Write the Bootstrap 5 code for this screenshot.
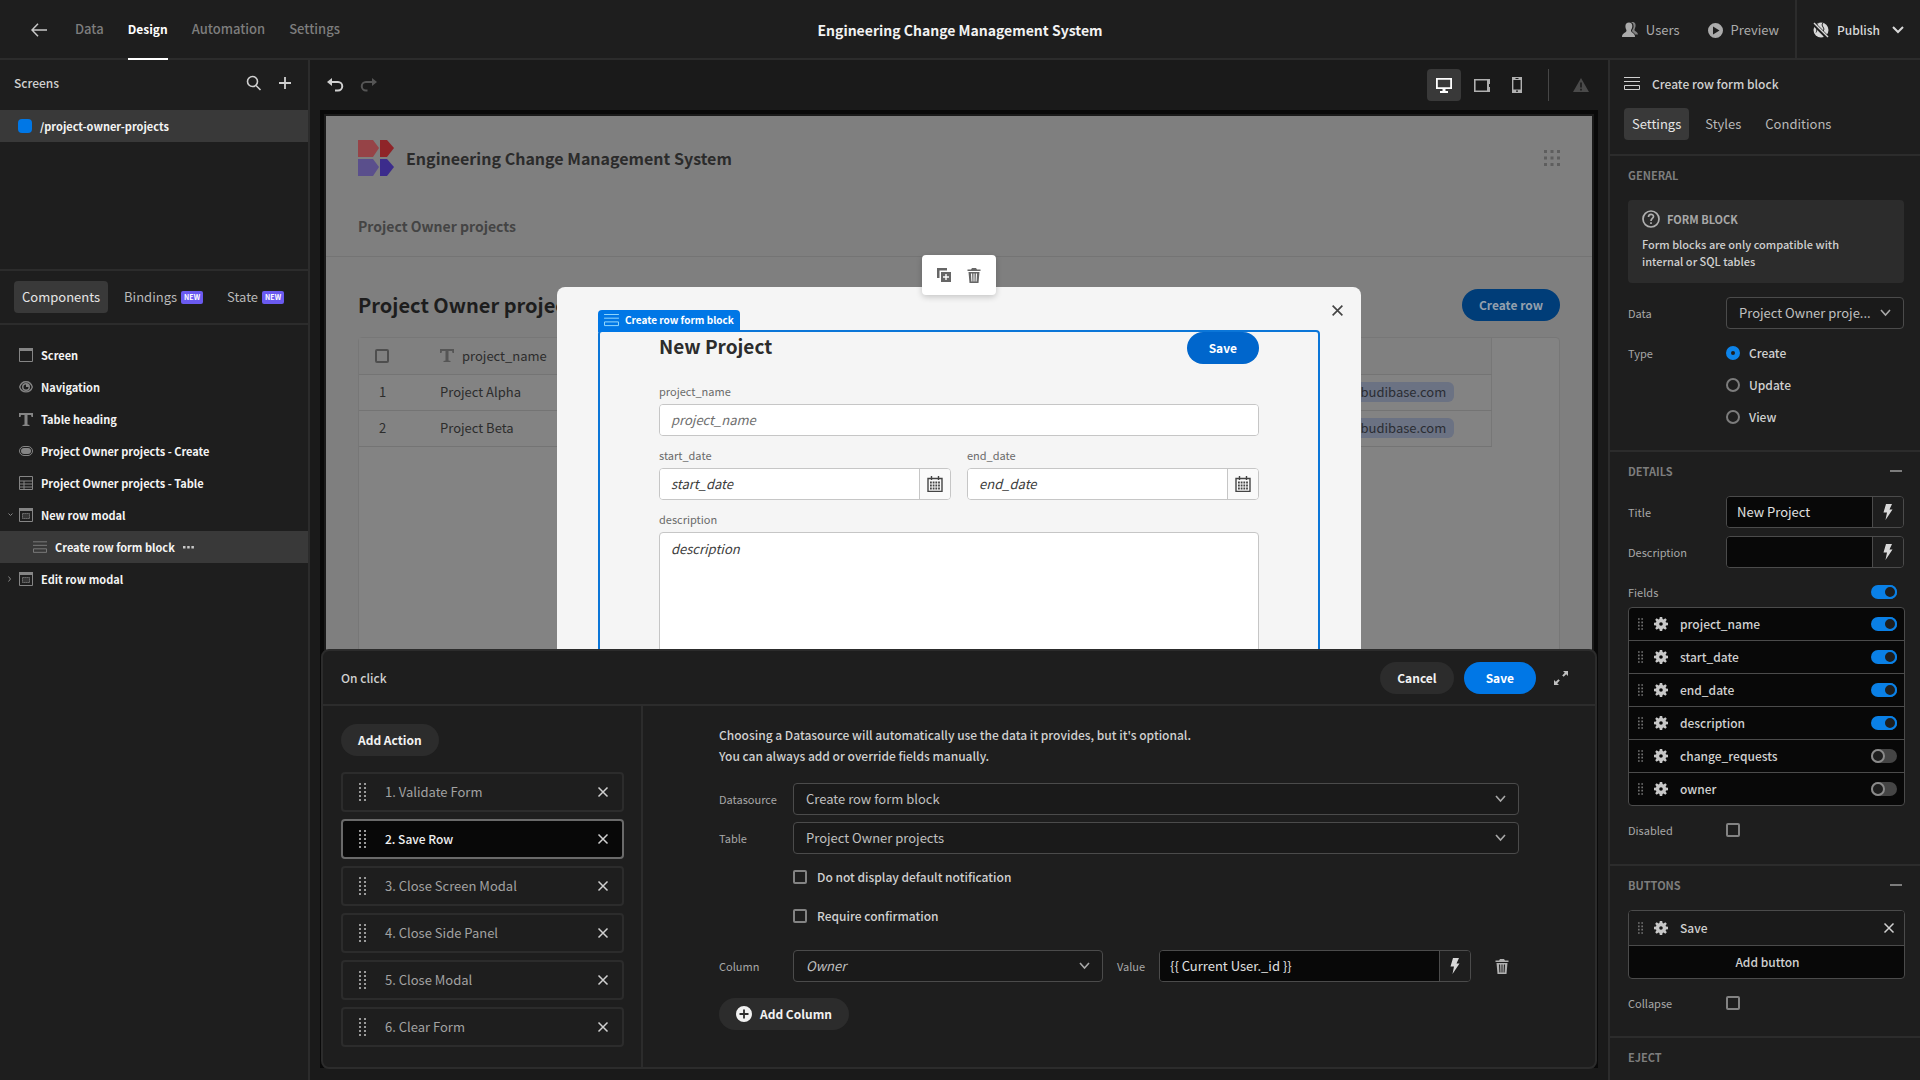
<!DOCTYPE html>
<html lang="en" data-bs-theme="dark">
<head>
<meta charset="utf-8">
<meta name="viewport" content="width=device-width, initial-scale=1">
<title>Engineering Change Management System</title>
<link href="https://cdn.jsdelivr.net/npm/bootstrap@5.3.0/dist/css/bootstrap.min.css" rel="stylesheet">
<style>
:root{--ui:"Noto Sans CJK SC","Noto Sans",sans-serif;--panel:#1e1e1e;--deep:#1a1a1a;--line:#2c2c2c;--hover:#393939;--edge:#4b4b4b;--text:#d0d0d0;--blue:#0077e6}
body{font-family:var(--ui);font-size:13px;line-height:20px;color:var(--text);background:var(--deep)}
svg{display:block;flex:none;fill:currentColor}
.stroke{fill:none;stroke:currentColor}
button,input,select,textarea{font-family:inherit}
.iconbtn{background:none;border:0;padding:0;color:inherit}
a{color:inherit;text-decoration:none}
.strong-ish{font-size:12px;font-weight:500}
/* top bar */
.topbar{height:60px;background:var(--panel);border-bottom:2px solid var(--line);display:grid;grid-template-columns:1fr auto 1fr}
.topnav{gap:24px;padding-left:31px;color:#7d7d7d;font-weight:500}
.topnav .places{gap:24px;margin-left:4px}
.topnav a{height:60px;line-height:58px}
.topnav a.current{color:#fff;font-weight:700;border-bottom:2px solid #fff;font-size:12px}
.topright{color:#ababab}
.apptitle{font-size:14px;font-weight:700;color:#f2f2f2;margin:0}
.publish{border-left:2px solid var(--line);padding:0 16px;gap:8px;color:#d8d8d8;font-size:12px;font-weight:500}
/* side panels */
.leftside{width:310px;background:var(--panel);border-right:2px solid var(--line)}
.rightside{width:312px;background:var(--panel);border-left:2px solid var(--line)}
.navrow{height:32px;font-size:11px;font-weight:700;color:#f4f4f4;gap:8px;padding-left:19px;position:relative}
.navrow svg{color:#858585}
.navrow.nested{padding-left:33px}
.navrow.picked{background:var(--hover)}
.navrow .twist{position:absolute;left:8px}
.screenlist{height:159px}
.dot{width:14px;height:14px;border-radius:4px;background:var(--blue)}
.tabset{gap:8px}
.tabset button{height:32px;padding:0 8px;border:0;border-radius:4px;background:none;color:#b8b8b8;gap:4px;font-size:13px}
.tabset button.on{background:var(--hover);color:#e6e6e6}
.newtag{background:#6a5af0;color:#fff;font-size:7px;font-weight:700;line-height:13px;height:13px;padding:0 3px;border-radius:2px}
.ruled{border-bottom:2px solid var(--line)}
/* settings */
.sect{padding:10px 16px 17px 18px;border-bottom:2px solid var(--line)}
.sect h2{font-size:11px;line-height:18px;font-weight:700;color:#7d7d7d;margin:0 0 16px}
.setrow{min-height:32px;margin-bottom:8px}
.setrow .lab{width:98px;flex:none;font-size:11px;color:#a8a8a8}
.hint{background:var(--line);border-radius:4px;padding:10px 14px;height:83px;margin-bottom:14px;font-size:11px;line-height:17px;font-weight:500}
.hint strong{font-size:11px;line-height:18px;color:#a8a8a8}
.dd{height:32px;width:100%;border:1px solid var(--edge);border-radius:4px;background-color:var(--deep);color:#c0c0c0;font-size:13px;line-height:20px;padding:0 28px 0 12px;appearance:none;background-repeat:no-repeat;background-position:right 12px center;background-image:url("data:image/svg+xml,%3Csvg xmlns='http://www.w3.org/2000/svg' width='11' height='8' fill='none' stroke='%23a8a8a8' stroke-width='1.600'%3E%3Cpath d='M1 1l4.500 5L10 1'/%3E%3C/svg%3E")}
.combo{height:32px;border:1px solid var(--edge);border-radius:4px;overflow:hidden;width:100%}
.combo input{background:#080808;border:0;color:#e0e0e0;font-size:13px;padding:0 10px;min-width:0;flex:1}
.combo button{width:31px;border:0;border-left:1px solid var(--edge);background:var(--panel);color:#d8d8d8;display:flex;align-items:center;justify-content:center}
.box{appearance:none;width:14px;height:14px;margin:0;border:2px solid #838383;border-radius:2px;background:none;flex:none}
.ring{appearance:none;width:14px;height:14px;margin:0;border:2px solid #7c7c7c;border-radius:50%;flex:none}
.ring:checked{border:5px solid #0d84ea}
.radiorow{height:32px;gap:9px;font-size:12px;font-weight:500}
.flip{appearance:none;width:26px;height:14px;border-radius:7px;background:#454545;margin:0;flex:none;display:flex}
.flip::before{content:"";width:14px;height:14px;border-radius:50%;border:2px solid #8a8a8a;background:var(--panel)}
.flip:checked{background:#0a80e6;justify-content:flex-end}
.flip:checked::before{border-color:#0a80e6}
.rows{border:1px solid var(--edge);border-radius:4px;overflow:hidden;background:#080808;margin:0 -1px 8px 0}
.rowitem{height:33px;padding:0 7px 0 9px;border-bottom:1px solid var(--edge);font-size:12px;font-weight:500}
.rows .rowitem:last-child{border-bottom:0;height:32px}
.rowitem .gear{margin:0 12px 0 11px;color:#c8c8c8}
.grip{color:#707070}
.sect .rowitem label{flex:1}
/* centre */
.stage{background:var(--deep);position:relative}
.tools{height:50px;padding:0 10px 0 17px}
.devices .iconbtn{width:34px;height:32px;border-radius:4px;display:flex;align-items:center;justify-content:center;color:#b0b0b0}
.devices .iconbtn.on{background:var(--hover);color:#fff}
.frame{margin:0 10px 12px;background:#090909;padding:4px 4px 0}
.site{border:2px solid var(--deep);background:#7f7f7f;color:#2c2c2c;position:relative;overflow:hidden}
.sitehead{padding:24px 32px 0;height:141px;border-bottom:1px solid #747474}
.sitehead h1{font-size:16px;line-height:24px;font-weight:700;margin:0;color:#2b2b2b}
.sitehead .menu{font-size:14px;font-weight:700;color:#444}
.sitebody{padding:32px}
.sitebody h2{font-size:20px;line-height:32px;font-weight:700;color:#1d1d1d;margin:0}
.pill{height:32px;border:0;border-radius:16px;font-size:12px;line-height:20px;font-weight:700;padding:0 17px;color:#fff}
.pill.wide{padding:0 22px}
.gridbox{margin-top:16px;border:1px solid #777;border-radius:4px;height:600px;background:#838383}
.gridbox table{border-collapse:collapse;table-layout:fixed;width:calc(100% - 67px)}
.gridbox tr{height:36px}
.gridbox td,.gridbox th{border-bottom:1px solid #747474;padding:0 0 0 16px;font-weight:400}
.gridbox td:last-child,.gridbox th:last-child{border-right:1px solid #777;padding-left:6px}
.gridbox thead{background:#808080}
.chip{display:inline-block;line-height:20px;padding:0 8px;border-radius:6px;background:#6b7283;color:#2a2d33}
.popup{position:absolute;left:50%;transform:translateX(-50%);top:171px;width:804px;height:700px;background:#f5f5f5;border-radius:8px;padding:43px 41px 0;color:#2c2c2c}
.popup .shut{position:absolute;right:17px;top:17px;color:#444}
.picked-block{border:2px solid #0b76d8;border-radius:4px;height:700px;padding:0 59px;position:relative}
.blocktag{position:absolute;left:-2px;bottom:100%;height:22px;background:var(--blue);color:#fff;border-radius:4px 4px 0 0;padding:0 6px 2px;gap:6px;font-size:10px;font-weight:700;white-space:nowrap}
.quick{position:absolute;left:50%;transform:translateX(-50%);top:139px;width:74px;height:40px;background:#fff;border-radius:4px;box-shadow:0 2px 6px rgba(0,0,0,.2);color:#666;gap:16px}
.popup h3{font-size:19px;line-height:28px;font-weight:700;margin:0;color:#2c2c2c}
.popup .lab{display:block;font-size:11px;line-height:22px;margin-bottom:2px;color:#6a6a6a}
.field{height:32px;border:1px solid #c6c6c6;border-radius:4px;background:#fff;overflow:hidden}
.field input,.bigtext{border:0;background:#fff;font-size:13px;font-style:italic;padding:0 11px;min-width:0;flex:1;color:#333}
.field input::placeholder,.bigtext::placeholder{color:#3c3c3c;opacity:1}
.field input.soft::placeholder{color:#6e6e6e}
.field button{width:31px;border:0;border-left:1px solid #c6c6c6;background:#fafafa;color:#444;display:flex;align-items:center;justify-content:center}
.bigtext{border:1px solid #c6c6c6;border-radius:4px;width:100%;height:300px;padding:6px 11px;resize:none;display:block}
/* drawer */
.drawer{position:absolute;left:11px;right:11px;bottom:11px;height:420px;background:var(--panel);border:2px solid var(--line);border-radius:8px;overflow:hidden}
.drawerhead{height:55px;padding:0 27px 0 18px;gap:10px}
.grey{background:var(--line);color:#f2f2f2}
.steps{width:320px;border-right:2px solid var(--line);padding:18px 17px 0 18px}
.step{height:40px;border:2px solid var(--line);border-radius:4px;margin-bottom:7px;padding:0 13px 0 16px;color:#a2a2a2}
.step .grip{color:#9a9a9a;margin-right:19px}
.step .iconbtn{color:#d0d0d0}
.step.on{background:#080808;border-color:#6a6a6a;color:#f0f0f0;font-size:12px;font-weight:500}
.detail{padding:18px 24px 0}
.inner{max-width:800px;margin:0 auto}
.inner .lab{width:74px;flex:none;font-size:11px;color:#a8a8a8}
.inner p{font-size:12px;font-weight:500;line-height:21px;margin:0 0 17px}
.tick{height:32px;gap:10px;margin:0 0 7px 74px;font-size:12px;font-weight:500}
</style>
</head>
<body class="vh-100 d-flex flex-column overflow-hidden">
<svg width="0" height="0" class="position-absolute" aria-hidden="true">
<symbol id="x" viewBox="0 0 12 12"><path d="M1.500 1.500l9 9M10.500 1.500l-9 9" fill="none" stroke="currentColor" stroke-width="1.500"/></symbol>
<symbol id="grip" viewBox="0 0 6 14"><path d="M0 0h2v2H0zM4 0h2v2H4zM0 4h2v2H0zM4 4h2v2H4zM0 8h2v2H0zM4 8h2v2H4zM0 12h2v2H0zM4 12h2v2H4z"/></symbol>
<symbol id="grip5" viewBox="0 0 7 18"><path d="M0 0h2v2H0zM5 0h2v2H5zM0 4h2v2H0zM5 4h2v2H5zM0 8h2v2H0zM5 8h2v2H5zM0 12h2v2H0zM5 12h2v2H5zM0 16h2v2H0zM5 16h2v2H5z"/></symbol>
<symbol id="gear" viewBox="0 0 14 14"><path fill-rule="evenodd" d="M5.800 0h2.400l.4 2 1 .4 1.700-1.200 1.500 1.500-1.200 1.700.4 1 2 .4v2.400l-2 .4-.4 1 1.200 1.700-1.500 1.500-1.700-1.200-1 .4-.4 2H5.800l-.4-2-1-.4-1.700 1.200-1.500-1.500 1.200-1.700-.4-1-2-.4V5.800l2-.4.4-1L1.200 2.700l1.500-1.500 1.700 1.200 1-.4zM7 5.200a1.800 1.800 0 100 3.600 1.800 1.800 0 000-3.600z"/></symbol>
<symbol id="bolt" viewBox="0 0 10 16"><path d="M3 0h6L6.500 5.500H9.500L2.500 16 4 8.500H.5z"/></symbol>
<symbol id="bin" viewBox="0 0 14 15"><path fill-rule="evenodd" d="M5 0h4l1 1.500h3.500v1.600H.5V1.500H4zM1.500 4h11l-1 11h-9zM4 5.500l.4 8h1l-.3-8zM6.500 5.500v8h1v-8zM8.900 5.500l-.3 8h1l.4-8z"/></symbol>
<symbol id="form" viewBox="0 0 16 14"><path d="M0 .5h16M0 4.500h16M.5 8.500h15v4H.5z" fill="none" stroke="currentColor"/></symbol>
<symbol id="modal" viewBox="0 0 14 14"><path d="M.5 1h13v12.500H.5z" fill="none" stroke="currentColor"/><path d="M0 0h14v3H0z"/><path d="M3.500 5.500h7v5h-7z" fill="currentColor" fill-opacity=".25" stroke="currentColor" stroke-dasharray="1.200 .8"/></symbol>
<symbol id="tee" viewBox="0 0 14 13"><path d="M0 0h14v4h-1.500L12 2H8.500v9.500l2 .5v1h-7v-1l2-.5V2H2l-.5 2H0z"/></symbol>
<symbol id="cal" viewBox="0 0 16 16"><path d="M1 2.500h14v13H1zM4.500 0v4M11.500 0v4" fill="none" stroke="currentColor" stroke-width="1.400"/><path d="M3 6.500h10M3 9.500h10M3 12.500h10" stroke="currentColor" stroke-width="1.800" stroke-dasharray="1.800 .9"/></symbol>
</svg>

<header class="topbar">
  <nav class="topnav d-flex align-items-center">
    <button class="iconbtn" aria-label="Back" style="color:#c8c8c8"><svg class="stroke" width="16" height="14" stroke-width="1.500"><path d="M16 7H1M7 .800L1 7l6 6.200"/></svg></button>
    <div class="places d-flex"><a href="#">Data</a><a href="#" class="current">Design</a><a href="#">Automation</a><a href="#">Settings</a></div>
  </nav>
  <h1 class="apptitle align-self-center">Engineering Change Management System</h1>
  <div class="topright d-flex justify-content-end">
    <a href="#" class="d-flex align-items-center gap-2 me-4 pe-1"><svg width="16" height="16"><path d="M10 0c3 0 4 2 3.500 4.500-.3 1.700-1 2.500-1 3.500 0 1.300 3.500 2 3.500 4.500h-3c-.5-2-3-2.500-3-3.500 0-1.500 2-2.500 1.500-5.500C11.300 1.700 10.500.700 9 .300z" opacity=".7"/><path d="M7 .500c2.200 0 3.500 1.600 3.300 4C10.100 6.800 9 7.500 9 8.700c0 1.800 4 2 4 6.300H0c0-4.300 4.500-4.500 4.500-6.300C4.500 7.500 3.500 6.800 3.400 4.500 3.300 2 4.800.5 7 .5z"/></svg>Users</a>
    <a href="#" class="d-flex align-items-center gap-2 me-3"><svg width="15" height="15"><path fill-rule="evenodd" d="M7.500 0a7.500 7.500 0 100 15 7.500 7.500 0 000-15zM5 3.500l6.500 4L5 11.500z"/></svg>Preview</a>
    <button class="iconbtn publish d-flex align-items-center"><svg width="16" height="16"><circle cx="8" cy="8" r="7.500"/><path d="M5 1.500c-3 3 0 6-2 9M10 1c-3 3 3 5 0 8s2 4 1 6" fill="none" stroke="#1e1e1e"/><path d="M0 1l15 15" stroke="#1e1e1e" stroke-width="4"/><path d="M1 1l14 14" stroke="currentColor" stroke-width="1.400"/></svg>Publish<svg class="stroke ms-1" width="12" height="8" stroke-width="2"><path d="M1 1l5 5 5-5"/></svg></button>
  </div>
</header>

<div class="d-flex flex-grow-1 overflow-hidden">
  <aside class="leftside flex-shrink-0">
    <div class="d-flex align-items-center tools" style="padding:0 16px 4px 14px"><span class="me-auto strong-ish">Screens</span>
      <button class="iconbtn me-3" aria-label="Search"><svg class="stroke" width="16" height="16" stroke-width="1.600"><circle cx="6.500" cy="6.500" r="5"/><path d="M10 10.500l4.500 4.500"/></svg></button>
      <button class="iconbtn" aria-label="Add screen"><svg class="stroke" width="14" height="14" stroke-width="1.800"><path d="M7 1v12M1 7h12"/></svg></button></div>
    <div class="screenlist"><a href="#" class="navrow picked d-flex align-items-center" style="padding-left:18px"><span class="dot"></span>/project-owner-projects</a></div>
    <div class="tabset ruled d-flex align-items-center" style="padding:10px 14px;border-top:2px solid var(--line)">
      <button class="on">Components</button><button class="d-flex align-items-center">Bindings<span class="newtag">NEW</span></button><button class="d-flex align-items-center">State<span class="newtag">NEW</span></button>
    </div>
    <div style="padding-top:14px">
      <a href="#" class="navrow d-flex align-items-center"><svg width="14" height="14"><path class="stroke" d="M.5 1h13v12.500H.5z"/><path d="M0 0h14v3H0z"/></svg>Screen</a>
      <a href="#" class="navrow d-flex align-items-center"><svg width="14" height="14"><path d="M.700 7c2-7 10.600-7 12.600 0-2 6.500-10.600 6.500-12.600 0z" class="stroke" stroke-width="1.300"/><path fill-rule="evenodd" d="M7 3a4 4 0 100 8 4 4 0 000-8zm0 1.500V7h2.500A2.500 2.500 0 117 4.500z"/></svg>Navigation</a>
      <a href="#" class="navrow d-flex align-items-center"><svg width="14" height="13"><use href="#tee"/></svg>Table heading</a>
      <a href="#" class="navrow d-flex align-items-center"><svg width="14" height="10"><rect class="stroke" x=".5" y=".5" width="13" height="9" rx="4.500"/><rect x="2" y="2" width="10" height="6" rx="3"/></svg>Project Owner projects - Create</a>
      <a href="#" class="navrow d-flex align-items-center"><svg class="stroke" width="14" height="14"><path d="M.5.500h13v13H.5zM.5 5h13M.5 8h13M.5 11h13M5 5v9"/></svg>Project Owner projects - Table</a>
      <a href="#" class="navrow d-flex align-items-center"><svg class="twist stroke" width="5" height="4"><path d="M.5.500l2 2 2-2"/></svg><svg width="14" height="14"><use href="#modal"/></svg>New row modal</a>
      <a href="#" class="navrow nested picked d-flex align-items-center"><svg width="14" height="13"><use href="#form"/></svg>Create row form block<svg width="11" height="3" style="color:#c8c8c8"><path d="M0 0h2.500v2.500H0zM4.200 0h2.500v2.500H4.200zM8.400 0h2.500v2.500H8.400z"/></svg></a>
      <a href="#" class="navrow d-flex align-items-center"><svg class="twist stroke" width="4" height="6"><path d="M.5.500l2 2.500-2 2.500"/></svg><svg width="14" height="14"><use href="#modal"/></svg>Edit row modal</a>
    </div>
  </aside>

  <main class="stage flex-grow-1 d-flex flex-column" style="min-width:0">
    <div class="tools d-flex align-items-center">
      <button class="iconbtn me-3" aria-label="Undo"><svg width="17" height="14"><path class="stroke" stroke-width="2" d="M3 4h8a4 4 0 010 8.500H8"/><path d="M0 4l5-4v8z"/></svg></button>
      <button class="iconbtn me-auto" aria-label="Redo" style="color:#555"><svg width="17" height="14"><path class="stroke" stroke-width="2" d="M14 4H6a4 4 0 000 8.500h1.500"/><path d="M17 4l-5-4v8z"/></svg></button>
      <div class="devices d-flex align-items-center">
        <button class="iconbtn on" aria-label="Desktop"><svg width="16" height="15"><path fill-rule="evenodd" d="M0 0h16v11H9.500v2H12v2H4v-2h2.500v-2H0zM1.800 1.800v7.400h12.400V1.800z"/></svg></button>
        <button class="iconbtn mx-1" aria-label="Tablet"><svg width="16" height="13"><path fill-rule="evenodd" d="M0 0h16v5h-1v3h1v5H0zM1.600 1.600v9.800h11.400V1.600z"/></svg></button>
        <button class="iconbtn" aria-label="Phone" style="margin-left:-3px"><svg width="10" height="16"><path fill-rule="evenodd" d="M0 0h10v16H0zM1.400 3v9.500h7.200V3zM3.500 1h3v1h-3zM4 13.500h2v1.300H4z"/></svg></button>
        <span class="vr" style="height:32px;margin:0 15px 0 14px"></span>
        <button class="iconbtn" aria-label="Warnings" style="color:#4a4a4a"><svg width="16" height="14"><path fill-rule="evenodd" d="M8 0l8 14H0zM7.200 4.500v5h1.600v-5zM7.200 10.800v1.600h1.600v-1.600z"/></svg></button>
      </div>
    </div>
    <div class="frame flex-grow-1 d-flex" style="min-height:0">
      <div class="site flex-grow-1">
        <div class="sitehead">
          <div class="d-flex align-items-center" style="height:36px;gap:12px">
            <svg width="36" height="36"><path fill="#964347" d="M0 0h15l6 8-6 9H0z"/><path fill="#8f2428" d="M22 0h7l7 8-7 9h-7z"/><path fill="#5a4f8c" d="M0 19h15l6 8-6 9H0z"/><path fill="#3c2c8c" d="M22 19h7l7 8-7 9h-7z"/></svg>
            <h1 class="me-auto">Engineering Change Management System</h1>
            <svg width="16" height="16" style="color:#5e5e5e"><path d="M0 0h3v3H0zM6.500 0h3v3h-3zM13 0h3v3h-3zM0 6.500h3v3H0zM6.500 6.500h3v3h-3zM13 6.500h3v3h-3zM0 13h3v3H0zM6.500 13h3v3h-3zM13 13h3v3h-3z"/></svg>
          </div>
          <a href="#" class="menu d-block" style="padding-top:40px">Project Owner projects</a>
        </div>
        <div class="sitebody">
          <div class="d-flex justify-content-between"><h2>Project Owner projects</h2><button class="pill" style="background:#003d78;color:#93a0ad">Create row</button></div>
          <div class="gridbox">
            <table>
              <colgroup><col style="width:65px"><col><col style="width:145px"></colgroup>
              <thead><tr><th><input type="checkbox" class="box d-block" style="border-color:#4e4e4e" aria-label="Select all rows"></th><th><span class="d-flex align-items-center gap-2"><svg width="14" height="13" style="color:#555"><use href="#tee"/></svg>project_name</span></th><th></th></tr></thead>
              <tbody><tr><td style="padding-left:20px">1</td><td>Project Alpha</td><td><span class="chip">budibase.com</span></td></tr>
              <tr><td style="padding-left:20px">2</td><td>Project Beta</td><td><span class="chip">budibase.com</span></td></tr></tbody>
            </table>
          </div>
        </div>
        <div class="popup">
          <button class="iconbtn shut" aria-label="Close"><svg width="13" height="13"><use href="#x"/></svg></button>
          <div class="picked-block">
            <div class="blocktag d-flex align-items-center"><svg width="15" height="13" style="color:#9fe0ff"><use href="#form"/></svg>Create row form block</div>
            <div class="d-flex justify-content-between mb-3"><h3>New Project</h3><button class="pill wide" style="background:#0066cc">Save</button></div>
            <label class="lab" for="pn">project_name</label>
            <div class="field d-flex mb-2"><input id="pn" class="soft" placeholder="project_name"></div>
            <div class="d-flex gap-3 mb-2">
              <div class="flex-fill"><label class="lab" for="sd">start_date</label><div class="field d-flex"><input id="sd" placeholder="start_date"><button aria-label="Pick start date"><svg width="16" height="16"><use href="#cal"/></svg></button></div></div>
              <div class="flex-fill"><label class="lab" for="ed">end_date</label><div class="field d-flex"><input id="ed" placeholder="end_date"><button aria-label="Pick end date"><svg width="16" height="16"><use href="#cal"/></svg></button></div></div>
            </div>
            <label class="lab" for="ds">description</label>
            <textarea id="ds" class="bigtext" placeholder="description"></textarea>
          </div>
        </div>
        <div class="quick d-flex align-items-center justify-content-center">
          <button class="iconbtn" aria-label="Duplicate"><svg width="14" height="14"><path d="M0 0h10v2.500H2.500V10H0z"/><path fill-rule="evenodd" d="M4 4h10v10H4zM8.300 6v2.300H6v1.400h2.300V12h1.400V9.700H12V8.300H9.700V6z"/></svg></button>
          <button class="iconbtn" aria-label="Delete"><svg width="14" height="15"><use href="#bin"/></svg></button>
        </div>
      </div>
    </div>

    <section class="drawer d-flex flex-column">
      <div class="drawerhead ruled d-flex align-items-center flex-shrink-0"><span class="me-auto strong-ish">On click</span>
        <button class="pill grey">Cancel</button><button class="pill wide" style="background:var(--blue)">Save</button>
        <button class="iconbtn ms-2" aria-label="Expand" style="color:#c0c0c0"><svg width="14" height="14"><path d="M9 0h5v5l-1.800-1.800-2.600 2.600-1.400-1.400 2.600-2.600zM0 9l1.800 1.800 2.600-2.600 1.400 1.400-2.600 2.600L5 14H0z"/></svg></button></div>
      <div class="d-flex flex-grow-1">
        <div class="steps flex-shrink-0">
          <button class="pill grey mb-3">Add Action</button>
          <div class="step d-flex align-items-center"><svg class="grip" width="7" height="18"><use href="#grip5"/></svg><span class="me-auto">1. Validate Form</span><button class="iconbtn" aria-label="Remove"><svg width="12" height="12"><use href="#x"/></svg></button></div>
          <div class="step on d-flex align-items-center"><svg class="grip" width="7" height="18"><use href="#grip5"/></svg><span class="me-auto">2. Save Row</span><button class="iconbtn" aria-label="Remove"><svg width="12" height="12"><use href="#x"/></svg></button></div>
          <div class="step d-flex align-items-center"><svg class="grip" width="7" height="18"><use href="#grip5"/></svg><span class="me-auto">3. Close Screen Modal</span><button class="iconbtn" aria-label="Remove"><svg width="12" height="12"><use href="#x"/></svg></button></div>
          <div class="step d-flex align-items-center"><svg class="grip" width="7" height="18"><use href="#grip5"/></svg><span class="me-auto">4. Close Side Panel</span><button class="iconbtn" aria-label="Remove"><svg width="12" height="12"><use href="#x"/></svg></button></div>
          <div class="step d-flex align-items-center"><svg class="grip" width="7" height="18"><use href="#grip5"/></svg><span class="me-auto">5. Close Modal</span><button class="iconbtn" aria-label="Remove"><svg width="12" height="12"><use href="#x"/></svg></button></div>
          <div class="step d-flex align-items-center"><svg class="grip" width="7" height="18"><use href="#grip5"/></svg><span class="me-auto">6. Clear Form</span><button class="iconbtn" aria-label="Remove"><svg width="12" height="12"><use href="#x"/></svg></button></div>
        </div>
        <div class="detail flex-grow-1"><div class="inner">
          <p>Choosing a Datasource will automatically use the data it provides, but it's optional.<br>You can always add or override fields manually.</p>
          <div class="d-flex align-items-center" style="margin-bottom:7px"><label class="lab" for="src">Datasource</label><select id="src" class="dd"><option>Create row form block</option></select></div>
          <div class="d-flex align-items-center" style="margin-bottom:7px"><label class="lab" for="tb">Table</label><select id="tb" class="dd"><option>Project Owner projects</option></select></div>
          <label class="tick d-flex align-items-center"><input type="checkbox" class="box">Do not display default notification</label>
          <label class="tick d-flex align-items-center"><input type="checkbox" class="box">Require confirmation</label>
          <div class="d-flex align-items-center mb-3" style="margin-top:18px"><label class="lab" for="cl">Column</label><div style="flex:1 1 0"><select id="cl" class="dd fst-italic"><option>Owner</option></select></div><label class="lab" for="vl" style="width:56px;padding-left:14px">Value</label>
            <div class="combo d-flex" style="flex:1 1 0"><input id="vl" value="{{ Current User._id }}"><button aria-label="Bind value"><svg width="10" height="16"><use href="#bolt"/></svg></button></div>
            <button class="iconbtn" aria-label="Delete column" style="margin:0 10px 0 24px;color:#b0b0b0"><svg width="14" height="15"><use href="#bin"/></svg></button></div>
          <button class="pill grey d-flex align-items-center gap-2"><svg width="16" height="16"><path fill-rule="evenodd" d="M8 0a8 8 0 100 16A8 8 0 008 0zM7.100 3.500h1.800v3.600h3.600v1.800H8.900v3.600H7.100V8.900H3.500V7.100h3.600z"/></svg>Add Column</button>
        </div></div>
      </div>
    </section>
  </main>

  <aside class="rightside flex-shrink-0 overflow-hidden">
    <div class="ruled" style="padding:8px 14px 14px">
      <div class="d-flex align-items-center mb-2 strong-ish" style="height:32px;gap:12px"><svg width="16" height="14"><use href="#form"/></svg>Create row form block</div>
      <div class="tabset d-flex"><button class="on">Settings</button><button>Styles</button><button>Conditions</button></div>
    </div>
    <section class="sect"><h2>GENERAL</h2>
      <div class="hint"><div class="d-flex align-items-center mb-2" style="gap:7px"><svg class="stroke" width="18" height="18" stroke-width="1.700" style="color:#b0b0b0"><circle cx="9" cy="9" r="8"/><path d="M6.500 7c0-3.500 5-3.300 5-.4C11.500 8.500 9 8.500 9 11M9 12.200V14"/></svg><strong>FORM BLOCK</strong></div>Form blocks are only compatible with<br>internal or SQL tables</div>
      <div class="setrow d-flex align-items-center"><label class="lab" for="dt">Data</label><select id="dt" class="dd"><option>Project Owner proje...</option></select></div>
      <div class="d-flex" role="radiogroup" aria-label="Type"><span style="width:98px;font-size:11px;line-height:32px;color:#a8a8a8">Type</span><div>
        <label class="radiorow d-flex align-items-center"><input class="ring" type="radio" name="ty" checked>Create</label>
        <label class="radiorow d-flex align-items-center"><input class="ring" type="radio" name="ty">Update</label>
        <label class="radiorow d-flex align-items-center"><input class="ring" type="radio" name="ty">View</label></div></div>
    </section>
    <section class="sect" style="padding-bottom:18px"><h2 class="d-flex justify-content-between align-items-center">DETAILS<svg width="12" height="2" style="margin-right:2px"><path d="M0 0h12v2H0z"/></svg></h2>
      <div class="setrow d-flex align-items-center"><label class="lab" for="tt">Title</label><div class="combo d-flex"><input id="tt" value="New Project"><button aria-label="Bind title"><svg width="10" height="16"><use href="#bolt"/></svg></button></div></div>
      <div class="setrow d-flex align-items-center"><label class="lab" for="de">Description</label><div class="combo d-flex"><input id="de"><button aria-label="Bind description"><svg width="10" height="16"><use href="#bolt"/></svg></button></div></div>
      <div class="d-flex align-items-center" style="height:31px;padding-right:7px"><label class="me-auto" style="font-size:11px;color:#a8a8a8" for="fa">Fields</label><input type="checkbox" class="flip" id="fa" checked></div>
      <div class="rows">
        <div class="rowitem d-flex align-items-center"><svg class="grip" width="5" height="12"><use href="#grip"/></svg><svg class="gear" width="14" height="14"><use href="#gear"/></svg><label for="f1">project_name</label><input type="checkbox" class="flip" id="f1" checked></div>
        <div class="rowitem d-flex align-items-center"><svg class="grip" width="5" height="12"><use href="#grip"/></svg><svg class="gear" width="14" height="14"><use href="#gear"/></svg><label for="f2">start_date</label><input type="checkbox" class="flip" id="f2" checked></div>
        <div class="rowitem d-flex align-items-center"><svg class="grip" width="5" height="12"><use href="#grip"/></svg><svg class="gear" width="14" height="14"><use href="#gear"/></svg><label for="f3">end_date</label><input type="checkbox" class="flip" id="f3" checked></div>
        <div class="rowitem d-flex align-items-center"><svg class="grip" width="5" height="12"><use href="#grip"/></svg><svg class="gear" width="14" height="14"><use href="#gear"/></svg><label for="f4">description</label><input type="checkbox" class="flip" id="f4" checked></div>
        <div class="rowitem d-flex align-items-center"><svg class="grip" width="5" height="12"><use href="#grip"/></svg><svg class="gear" width="14" height="14"><use href="#gear"/></svg><label for="f5">change_requests</label><input type="checkbox" class="flip" id="f5"></div>
        <div class="rowitem d-flex align-items-center"><svg class="grip" width="5" height="12"><use href="#grip"/></svg><svg class="gear" width="14" height="14"><use href="#gear"/></svg><label for="f6">owner</label><input type="checkbox" class="flip" id="f6"></div>
      </div>
      <div class="setrow d-flex align-items-center mb-0"><label class="lab" for="di">Disabled</label><input type="checkbox" class="box" id="di"></div>
    </section>
    <section class="sect"><h2 class="d-flex justify-content-between align-items-center">BUTTONS<svg width="12" height="2" style="margin-right:2px"><path d="M0 0h12v2H0z"/></svg></h2>
      <div class="rows">
        <div class="rowitem d-flex align-items-center" style="height:35px;background:var(--deep)"><svg class="grip" width="5" height="12"><use href="#grip"/></svg><svg class="gear" width="14" height="14"><use href="#gear"/></svg><span class="me-auto">Save</span><button class="iconbtn" aria-label="Remove button" style="margin-right:2px"><svg width="12" height="12"><use href="#x"/></svg></button></div>
        <button class="iconbtn rowitem w-100 text-center">Add button</button>
      </div>
      <div class="setrow d-flex align-items-center mb-0"><label class="lab" for="co">Collapse</label><input type="checkbox" class="box" id="co"></div>
    </section>
    <section class="sect"><h2>EJECT</h2></section>
  </aside>
</div>
<script src="https://cdn.jsdelivr.net/npm/bootstrap@5.3.0/dist/js/bootstrap.bundle.min.js"></script>
</body>
</html>
